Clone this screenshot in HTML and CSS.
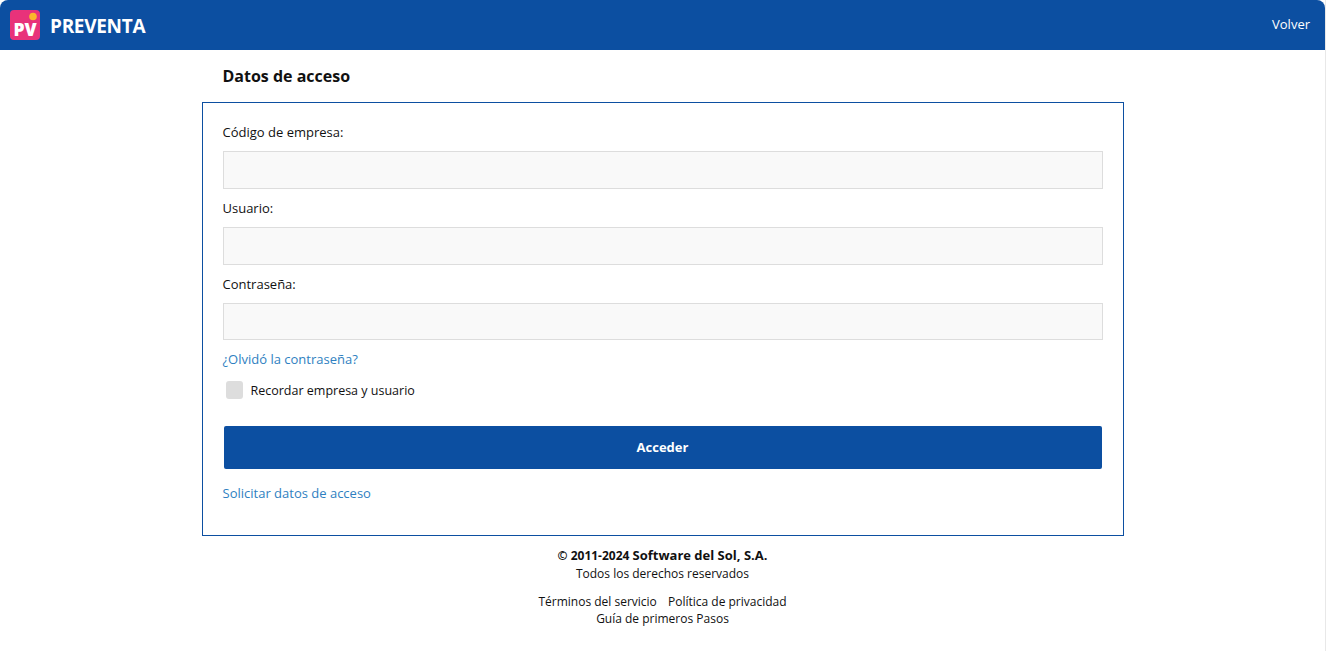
FILE: index.html
```html
<!DOCTYPE html>
<html lang="es">
<head>
    <meta charset="UTF-8">
    <title>Preventa - Datos de acceso</title>
    <meta name="viewport" content="width=device-width, initial-scale=1.0">
    <link rel="stylesheet" href="styles.css">
</head>
<body>
    <header class="topbar">
        <div class="brand">
            <svg class="logo" width="30" height="30" viewBox="0 0 30 30" aria-hidden="true">
                <rect width="30" height="30" rx="4" fill="#e8327a"/>
                <circle cx="23" cy="6.5" r="3.8" fill="#fbb62c"/>
                <text x="3.5" y="25.5" class="logo-text">PV</text>
            </svg>
            <span class="brand-name">PREVENTA</span>
        </div>
        <a class="back" href="#">Volver</a>
    </header>

    <main class="page">
        <h1 class="title">Datos de acceso</h1>
        <form class="card">
            <label class="label" for="empresa">Código de empresa:</label>
            <input class="field" id="empresa" type="text">
            <label class="label" for="usuario">Usuario:</label>
            <input class="field" id="usuario" type="text">
            <label class="label" for="clave">Contraseña:</label>
            <input class="field field-last" id="clave" type="password">
            <a class="link forgot" href="#">¿Olvidó la contraseña?</a>
            <label class="remember">
                <span class="check"></span>
                <span>Recordar empresa y usuario</span>
            </label>
            <button class="submit" type="button">Acceder</button>
            <a class="link request" href="#">Solicitar datos de acceso</a>
        </form>
        <footer class="footer">
            <p class="copyright">© 2011-2024 <span class="company">Software del Sol, S.A.</span></p>
            <p class="rights">Todos los derechos reservados</p>
            <div class="footer-links">
                <a href="#">Términos del servicio</a>
                <a href="#">Política de privacidad</a>
            </div>
            <div class="footer-links">
                <a href="#">Guía de primeros Pasos</a>
            </div>
        </footer>
    </main>
</body>
</html>
```

FILE: styles.css
```css
html, body {
    height: 100%;
}
body {
    margin: 0 1px 0 0;
    box-sizing: border-box;
    overflow: hidden;
    background-color: #fff;
    border-right: 1px solid #e8e8e8;
    color: #111;
    font-family: "Open Sans", sans-serif;
    font-size: 13px;
}
a {
    text-decoration: none;
    color: inherit;
}
.topbar {
    display: flex;
    align-items: center;
    justify-content: space-between;
    height: 50px;
    padding: 0 15px 0 10px;
    background-color: #0c4fa1;
    border-radius: 8px 8px 0 0;
}
.brand {
    display: flex;
    align-items: center;
    gap: 10px;
}
.logo {
    display: block;
}
.logo-text {
    font-family: "Open Sans", sans-serif;
    font-size: 17.5px;
    font-weight: 800;
    fill: #fff;
}
.brand-name {
    padding-top: 2px;
    color: #fff;
    font-size: 19px;
    font-weight: 700;
    letter-spacing: -0.3px;
}
.back {
    padding-bottom: 2px;
    color: #fff;
    font-size: 13px;
}
.page {
    display: flex;
    flex-direction: column;
    width: 922px;
    margin: 0 auto;
}
.title {
    margin: 16px 0 16px 21px;
    font-size: 16px;
    font-weight: 700;
    line-height: 20px;
    color: #111;
}
.card {
    display: flex;
    flex-direction: column;
    box-sizing: border-box;
    height: 434px;
    padding: 20px;
    border: 1px solid #0c4fa1;
}
.label {
    height: 18px;
    line-height: 18px;
    margin-bottom: 10px;
}
.field {
    box-sizing: border-box;
    width: 100%;
    height: 38px;
    margin-bottom: 10px;
    background-color: #f9f9f9;
    border: 1px solid #ddd;
}
.field-last {
    height: 37px;
}
.link {
    line-height: 18px;
    color: #2f7fc1;
}
.remember {
    display: flex;
    align-items: center;
    gap: 8px;
    margin: 13px 0 0 3px;
    height: 18px;
    font-size: 12.5px;
}
.check {
    width: 17px;
    height: 18px;
    border-radius: 3px;
    background-color: #ddd;
}
.submit {
    height: 43px;
    margin: 27px 1px 0;
    padding-bottom: 3px;
    border: none;
    border-radius: 2px;
    background-color: #0c4fa1;
    color: #fff;
    font-family: inherit;
    font-size: 13px;
    font-weight: 700;
}
.request {
    margin-top: 15px;
}
.footer {
    margin-top: 10px;
    text-align: center;
    font-size: 12px;
    line-height: 18px;
}
.footer p {
    margin: 0;
}
.copyright {
    font-size: 12px;
    font-weight: 700;
}
.company {
    font-size: 13px;
}
.rights {
    margin-bottom: 10px !important;
}
.footer-links:last-child {
    margin-top: -1px;
}
.footer-links a + a {
    margin-left: 8px;
}
```
